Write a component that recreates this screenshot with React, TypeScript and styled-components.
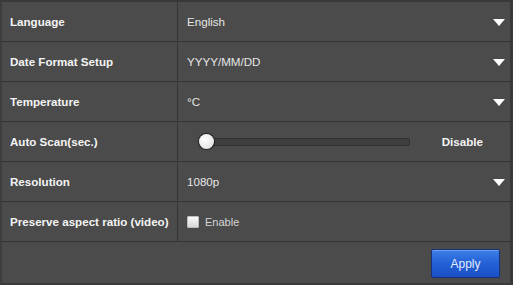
import { createGlobalStyle, styled } from "styled-components";

const GlobalStyle = createGlobalStyle`
  html, body {
    margin: 0;
    padding: 0;
    background: #4a4a4a;
  }
  body {
    font-family: "Liberation Sans", Arial, sans-serif;
  }
`;

const Panel = styled.div`
  width: 513px;
  height: 285px;
  box-sizing: border-box;
  background: #4b4b4b;
  border-top: 2px solid #393939;
  border-left: 2px solid #3d3d3d;
  border-right: 3px solid #383838;
  border-bottom: 2px solid #3a3a3a;
  display: flex;
  flex-direction: column;
`;

const Row = styled.div`
  display: grid;
  grid-template-columns: 176px 1fr;
  height: 40px;
  box-sizing: border-box;
  border-bottom: 1px solid #353535;
`;

const Label = styled.div`
  display: flex;
  align-items: center;
  padding-left: 8px;
  border-right: 1px solid #363636;
  color: #f4f4f4;
  font-weight: bold;
  font-size: 11.6px;
`;

const Value = styled.div`
  display: flex;
  align-items: center;
  padding: 0 5px 0 9px;
  color: #e6e6e6;
  font-size: 11.6px;
`;

const ValueText = styled.span`
  flex: 1;
`;

const Caret = styled.span`
  width: 0;
  height: 0;
  border-left: 6px solid transparent;
  border-right: 6px solid transparent;
  border-top: 7px solid #ffffff;
  margin-top: 1px;
`;

const SliderTrack = styled.div`
  position: relative;
  width: 204px;
  height: 8px;
  margin-left: 19px;
  box-sizing: border-box;
  background: #3f3f3f;
  border: 1px solid #2f2f2f;
  border-radius: 2px;
`;

const Thumb = styled.div`
  position: absolute;
  left: -8px;
  top: -5px;
  width: 15px;
  height: 15px;
  border-radius: 50%;
  background: radial-gradient(circle at 40% 35%, #ffffff, #e6e6e6 70%);
  box-shadow: 0 0 1px 1px #222;
`;

const SliderNote = styled.span`
  margin-left: auto;
  margin-right: 22px;
  color: #f4f4f4;
  font-weight: bold;
`;

const CheckBox = styled.span`
  width: 12px;
  height: 12px;
  margin-right: 6px;
  box-sizing: border-box;
  border: 1px solid #bdbdbd;
  border-radius: 1px;
  background: linear-gradient(#fafafa, #d8d8d8);
`;

const CheckLabel = styled.span`
  color: #d6d6d6;
  font-size: 11px;
`;

const Footer = styled.div`
  flex: 1;
  display: flex;
  justify-content: flex-end;
  align-items: center;
  padding-right: 10px;
`;

const ApplyButton = styled.button`
  width: 69px;
  height: 29px;
  margin-top: 2px;
  border: 1px solid #17317a;
  border-radius: 2px;
  background: linear-gradient(#3d7fe6, #2360d6 50%, #1a50c4);
  color: #e4ecff;
  font-family: "Liberation Sans", Arial, sans-serif;
  font-size: 12px;
  box-shadow: inset 0 1px 0 rgba(255, 255, 255, 0.25);
`;

const selects = [
  { label: "Language", value: "English" },
  { label: "Date Format Setup", value: "YYYY/MM/DD" },
  { label: "Temperature", value: "°C" },
];

const App = () => {
  return (
    <>
      <GlobalStyle />
      <Panel>
        {selects.map((s) => (
          <Row key={s.label}>
            <Label>{s.label}</Label>
            <Value>
              <ValueText>{s.value}</ValueText>
              <Caret />
            </Value>
          </Row>
        ))}
        <Row>
          <Label>Auto Scan(sec.)</Label>
          <Value>
            <SliderTrack>
              <Thumb />
            </SliderTrack>
            <SliderNote>Disable</SliderNote>
          </Value>
        </Row>
        <Row>
          <Label>Resolution</Label>
          <Value>
            <ValueText>1080p</ValueText>
            <Caret />
          </Value>
        </Row>
        <Row>
          <Label>Preserve aspect ratio (video)</Label>
          <Value>
            <CheckBox />
            <CheckLabel>Enable</CheckLabel>
          </Value>
        </Row>
        <Footer>
          <ApplyButton>Apply</ApplyButton>
        </Footer>
      </Panel>
    </>
  );
};

export default App;
